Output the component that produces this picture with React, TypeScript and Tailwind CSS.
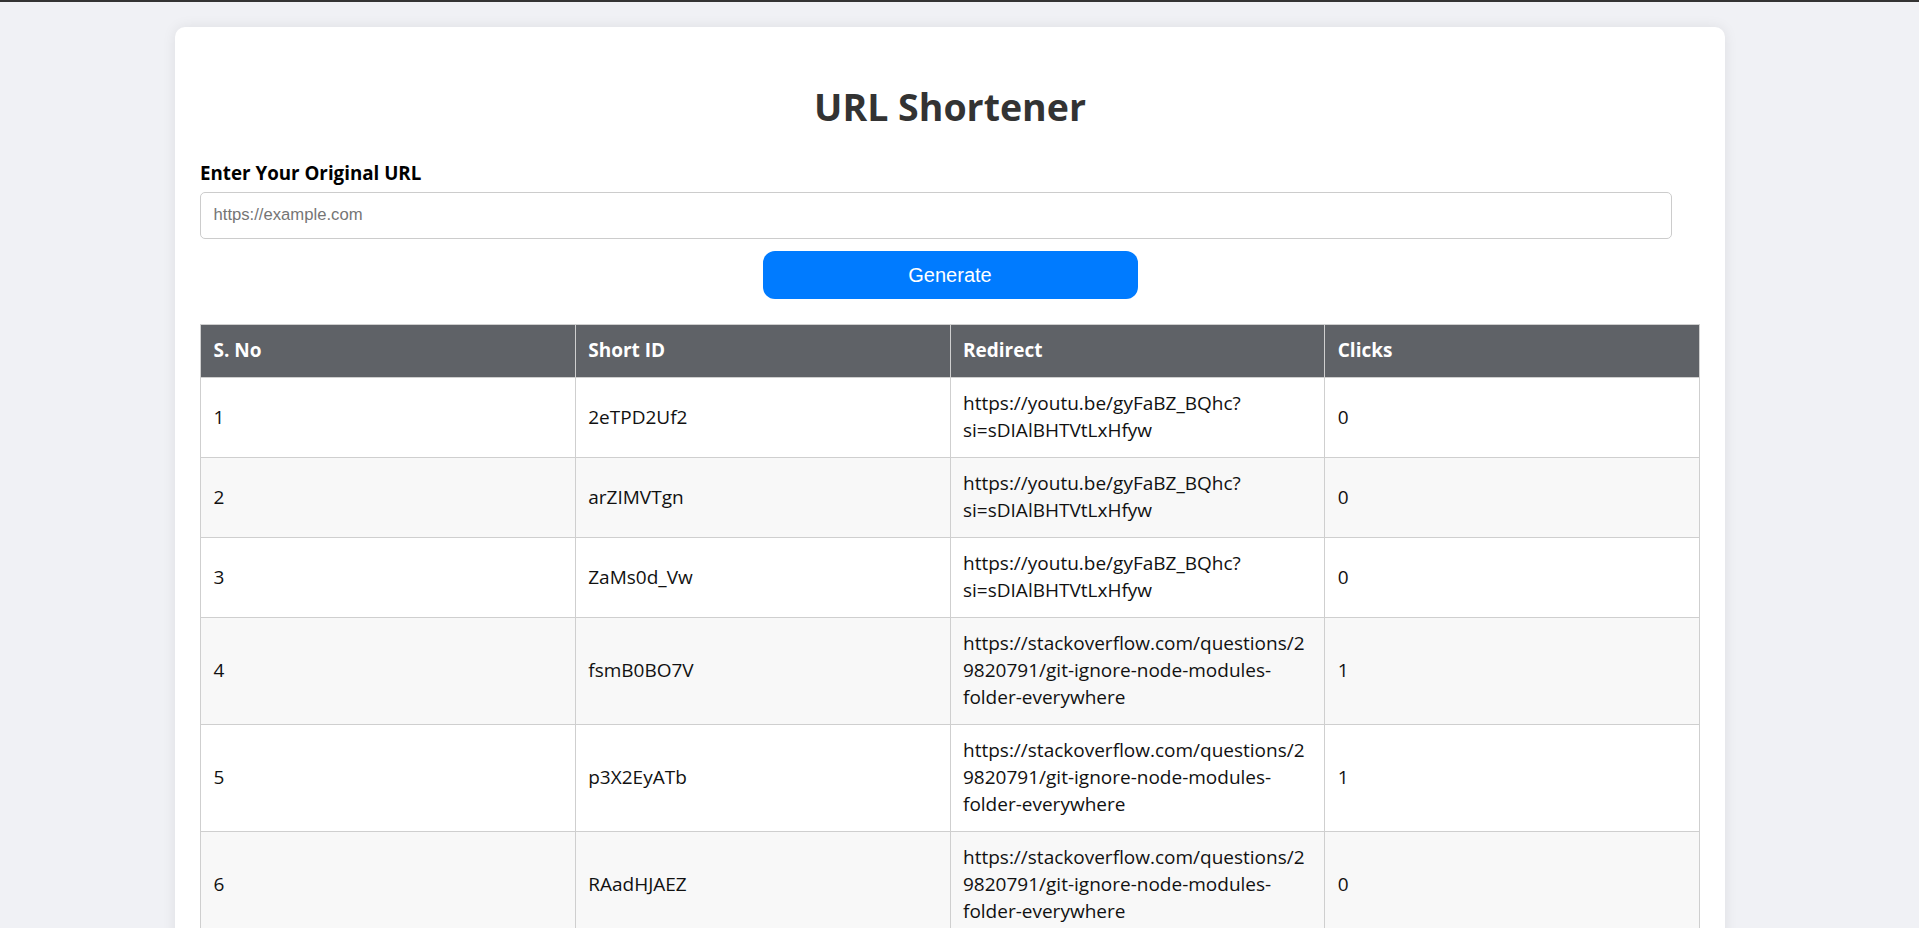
import { useState } from 'react'

interface ShortUrl {
  shortId: string
  redirect: string
  clicks: number
}

const urls: ShortUrl[] = [
  { shortId: '2eTPD2Uf2', redirect: 'https://youtu.be/gyFaBZ_BQhc?si=sDIAlBHTVtLxHfyw', clicks: 0 },
  { shortId: 'arZIMVTgn', redirect: 'https://youtu.be/gyFaBZ_BQhc?si=sDIAlBHTVtLxHfyw', clicks: 0 },
  { shortId: 'ZaMs0d_Vw', redirect: 'https://youtu.be/gyFaBZ_BQhc?si=sDIAlBHTVtLxHfyw', clicks: 0 },
  { shortId: 'fsmB0BO7V', redirect: 'https://stackoverflow.com/questions/29820791/git-ignore-node-modules-folder-everywhere', clicks: 1 },
  { shortId: 'p3X2EyATb', redirect: 'https://stackoverflow.com/questions/29820791/git-ignore-node-modules-folder-everywhere', clicks: 1 },
  { shortId: 'RAadHJAEZ', redirect: 'https://stackoverflow.com/questions/29820791/git-ignore-node-modules-folder-everywhere', clicks: 0 },
]

export default function App() {
  const [url, setUrl] = useState('')

  return (
    <div className="h-screen flex flex-col bg-[#f0f1f5] font-['Open_Sans',sans-serif] text-[#111]">
      <div className="h-[2px] shrink-0 bg-[#333]" />
      <div className="flex-1 overflow-y-scroll pt-[25px] pb-[25px] [&::-webkit-scrollbar]:w-[17px] [&::-webkit-scrollbar-track]:bg-[#f1f1f1] [&::-webkit-scrollbar-thumb]:bg-[#c1c1c1] [&::-webkit-scrollbar-thumb]:border-x-[2px] [&::-webkit-scrollbar-thumb]:border-solid [&::-webkit-scrollbar-thumb]:border-[#f1f1f1]">
        <div className="ml-[175px] w-[1550px] bg-white rounded-[10px] shadow-[0_0_14px_rgba(0,0,0,0.08)] p-[25px]">
          {/* Header */}
          <h1 className="mt-[30px] text-center text-[37.5px] leading-[50px] font-bold text-[#333]">
            URL Shortener
          </h1>

          {/* Form */}
          <form onSubmit={(e) => e.preventDefault()}>
            <label className="block mt-[28px] text-[18.75px] leading-[26.6px] font-bold text-black">
              Enter Your Original URL
            </label>
            <input
              type="text"
              value={url}
              onChange={(e) => setUrl(e.target.value)}
              placeholder="https://example.com"
              className="block mt-[5px] w-[1472px] h-[47px] px-[12.5px] border border-[#cccccc] rounded-[5px] font-['Liberation_Sans',Arial,sans-serif] text-[16.67px] placeholder:text-[#757575] outline-none"
            />
            <button
              type="submit"
              className="block mx-auto mt-[12px] w-[375px] h-[48px] rounded-[12px] bg-[#007bff] text-white font-['Liberation_Sans',Arial,sans-serif] text-[20px]"
            >
              Generate
            </button>
          </form>

          {/* Table */}
          <table className="mt-[25px] w-full table-fixed border-collapse text-[19px] leading-[27px]">
            <thead>
              <tr className="bg-[#5f6267] text-white">
                <th className="border border-[#cfcfcf] px-[12.5px] py-[12.5px] text-left font-bold">S. No</th>
                <th className="border border-[#cfcfcf] px-[12.5px] py-[12.5px] text-left font-bold">Short ID</th>
                <th className="border border-[#cfcfcf] px-[12.5px] py-[12.5px] text-left font-bold">Redirect</th>
                <th className="border border-[#cfcfcf] px-[12.5px] py-[12.5px] text-left font-bold">Clicks</th>
              </tr>
            </thead>
            <tbody>
              {urls.map((u, i) => (
                <tr key={u.shortId} className="odd:bg-white even:bg-[#f8f8f8]">
                  <td className="border border-[#cfcfcf] px-[12.5px] py-[12.5px] align-middle">{i + 1}</td>
                  <td className="border border-[#cfcfcf] px-[12.5px] py-[12.5px] align-middle">{u.shortId}</td>
                  <td className="border border-[#cfcfcf] px-[12.5px] py-[12.5px] align-middle break-words">{u.redirect}</td>
                  <td className="border border-[#cfcfcf] px-[12.5px] py-[12.5px] align-middle">{u.clicks}</td>
                </tr>
              ))}
            </tbody>
          </table>
        </div>
      </div>
    </div>
  )
}
